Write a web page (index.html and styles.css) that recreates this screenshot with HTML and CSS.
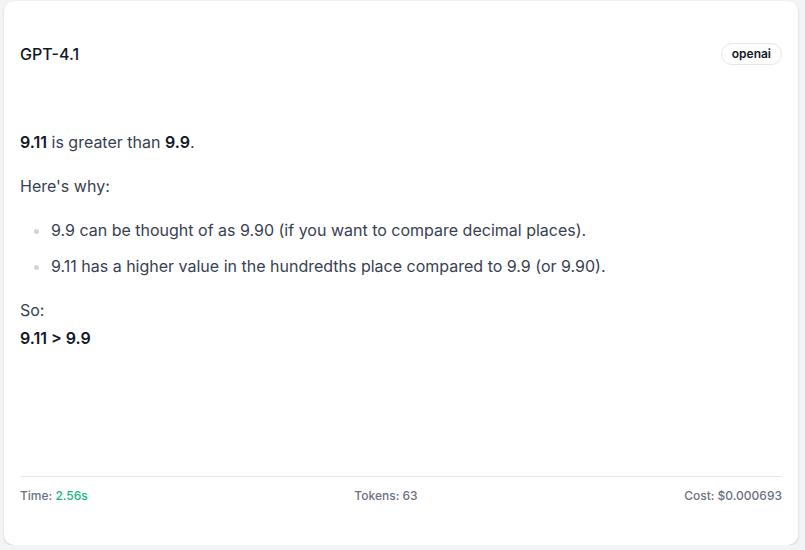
FILE: index.html
```html
<!DOCTYPE html>
<html lang="en">
<head>
    <meta charset="UTF-8">
    <meta name="viewport" content="width=device-width, initial-scale=1.0">
    <title>GPT-4.1</title>
    <link rel="stylesheet" href="styles.css">
</head>
<body>
    <div class="card">
        <div class="card-header">
            <span class="model-name">GPT-4.1</span>
            <span class="provider">openai</span>
        </div>

        <div class="answer">
            <p><strong>9.11</strong> is greater than <strong>9.9</strong>.</p>
            <p>Here's why:</p>
            <ul>
                <li>9.9 can be thought of as 9.90 (if you want to compare decimal places).</li>
                <li>9.11 has a higher value in the hundredths place compared to 9.9 (or 9.90).</li>
            </ul>
            <p>So:<br><strong>9.11 &gt; 9.9</strong></p>
        </div>

        <div class="card-footer">
            <span>Time: <span class="time">2.56s</span></span>
            <span>Tokens: 63</span>
            <span>Cost: $0.000693</span>
        </div>
    </div>
</body>
</html>
```

FILE: styles.css
```css
body {
    margin: 0;
    padding: 1px 0 0 4px;
    background-color: #f3f4f6;
    font-family: Inter, "Noto Sans", sans-serif;
}
.card {
    width: 794px;
    height: 544px;
    box-sizing: border-box;
    padding: 16px;
    background: white;
    border-radius: 10px;
    box-shadow: 0 1px 3px rgba(0, 0, 0, 0.1), 0 1px 2px rgba(0, 0, 0, 0.06);
    display: flex;
    flex-direction: column;
}
.card-header {
    display: flex;
    justify-content: space-between;
    align-items: center;
    padding-top: 26px;
}
.model-name {
    font-size: 16px;
    font-weight: 500;
    color: #111827;
}
.provider {
    font-size: 12px;
    line-height: 16px;
    font-weight: 600;
    color: #111827;
    padding: 2px 10px;
    border: 1px solid #e5e7eb;
    border-radius: 9999px;
}
.answer {
    margin-top: 63px;
    font-size: 16px;
    line-height: 28px;
    color: #374151;
}
.answer p {
    margin: 0 0 16px;
}
.answer strong {
    color: #111827;
    font-weight: 600;
}
.answer ul {
    margin: 0 0 16px;
    padding-left: 31px;
}
.answer li {
    margin-bottom: 8px;
}
.answer li::marker {
    color: #d1d5db;
}
.card-footer {
    margin-top: auto;
    display: flex;
    justify-content: space-between;
    border-top: 1px solid #e5e7eb;
    padding: 11px 0 25px;
    font-size: 12px;
    line-height: 16px;
    font-weight: 500;
    color: #6b7280;
}
.time {
    color: #10b981;
}
```
